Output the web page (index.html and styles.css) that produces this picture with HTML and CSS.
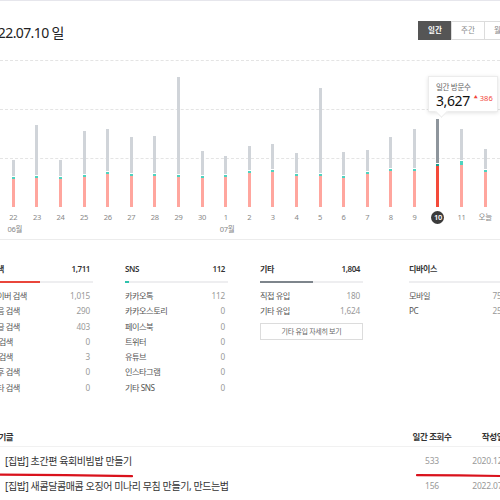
FILE: index.html
```html
<!DOCTYPE html>
<html lang="ko">
<head>
<meta charset="utf-8">
<title>방문 통계</title>
<link rel="stylesheet" href="styles.css">
</head>
<body>
<div class="topline"></div>
<header class="head">
  <div class="date">2022.07.10 일</div>
  <div class="tabs">
    <span class="tab on">일간</span><span class="tab">주간</span><span class="tab">월간</span>
  </div>
</header>

<section class="chart">
  <div class="grid"><div class="band"></div><div class="band"></div><div class="band"></div></div>
  <div class="bars">
    <div class="col"><div class="bar" style="height:47px"><i class="g"></i><i class="c"></i><i class="r" style="height:28px"></i></div></div>
    <div class="col"><div class="bar" style="height:82px"><i class="g"></i><i class="c"></i><i class="r" style="height:29px"></i></div></div>
    <div class="col"><div class="bar" style="height:47px"><i class="g"></i><i class="c"></i><i class="r" style="height:28px"></i></div></div>
    <div class="col"><div class="bar" style="height:76px"><i class="g"></i><i class="c"></i><i class="r" style="height:30px"></i></div></div>
    <div class="col"><div class="bar" style="height:78px"><i class="g"></i><i class="c"></i><i class="r" style="height:33px"></i></div></div>
    <div class="col"><div class="bar" style="height:70px"><i class="g"></i><i class="c"></i><i class="r" style="height:31px"></i></div></div>
    <div class="col"><div class="bar" style="height:71px"><i class="g"></i><i class="c"></i><i class="r" style="height:31px"></i></div></div>
    <div class="col"><div class="bar" style="height:130px"><i class="g"></i><i class="c"></i><i class="r" style="height:30px"></i></div></div>
    <div class="col"><div class="bar" style="height:56px"><i class="g"></i><i class="c"></i><i class="r" style="height:29px"></i></div></div>
    <div class="col"><div class="bar" style="height:51px"><i class="g"></i><i class="c"></i><i class="r" style="height:30px"></i></div></div>
    <div class="col"><div class="bar" style="height:61px"><i class="g"></i><i class="c"></i><i class="r" style="height:34px"></i></div></div>
    <div class="col"><div class="bar" style="height:63px"><i class="g"></i><i class="c"></i><i class="r" style="height:35px"></i></div></div>
    <div class="col"><div class="bar" style="height:54px"><i class="g"></i><i class="c"></i><i class="r" style="height:31px"></i></div></div>
    <div class="col"><div class="bar" style="height:119px"><i class="g"></i><i class="c"></i><i class="r" style="height:31px"></i></div></div>
    <div class="col"><div class="bar" style="height:55px"><i class="g"></i><i class="c"></i><i class="r" style="height:29px"></i></div></div>
    <div class="col"><div class="bar" style="height:57px"><i class="g"></i><i class="c"></i><i class="r" style="height:33px"></i></div></div>
    <div class="col"><div class="bar" style="height:70px"><i class="g"></i><i class="c"></i><i class="r" style="height:36px"></i></div></div>
    <div class="col"><div class="bar" style="height:78px"><i class="g"></i><i class="c"></i><i class="r" style="height:36px"></i></div></div>
    <div class="col"><div class="bar active" style="height:88px"><i class="g"></i><i class="c"></i><i class="r" style="height:41px"></i></div></div>
    <div class="col"><div class="bar" style="height:78px"><i class="g"></i><i class="c wide"></i><i class="r" style="height:42px"></i></div></div>
    <div class="col"><div class="bar" style="height:58px"><i class="g"></i><i class="c"></i><i class="r" style="height:35px"></i></div></div>
  </div>
  <div class="tip">
    <div class="tip-label">일간 방문수</div>
    <div class="tip-value">3,627<span class="tip-diff"><span class="up">▲</span>386</span></div>
  </div>
</section>

<div class="days">
  <span>22</span><span>23</span><span>24</span><span>25</span><span>26</span><span>27</span><span>28</span><span>29</span><span>30</span><span>1</span><span>2</span><span>3</span><span>4</span><span>5</span><span>6</span><span>7</span><span>8</span><span>9</span><span><b class="today">10</b></span><span>11</span><span>오늘</span>
  <span class="month">06월</span><span></span><span></span><span></span><span></span><span></span><span></span><span></span><span></span><span class="month">07월</span>
</div>

<section class="stats">
  <div class="box b1">
    <div class="shead"><span>검색</span><span>1,711</span></div>
    <div class="track"><div class="fill red" style="width:48.5%"></div></div>
    <ul class="rows">
      <li><span>네이버 검색</span><span class="v">1,015</span></li>
      <li><span>다음 검색</span><span class="v">290</span></li>
      <li><span>구글 검색</span><span class="v">403</span></li>
      <li><span>빙 검색</span><span class="v">0</span></li>
      <li><span>줌 검색</span><span class="v">3</span></li>
      <li><span>야후 검색</span><span class="v">0</span></li>
      <li><span>기타 검색</span><span class="v">0</span></li>
    </ul>
  </div>
  <div class="box b2">
    <div class="shead"><span>SNS</span><span>112</span></div>
    <div class="track"><div class="fill teal" style="width:4%"></div></div>
    <ul class="rows">
      <li><span>카카오톡</span><span class="v">112</span></li>
      <li><span>카카오스토리</span><span class="v">0</span></li>
      <li><span>페이스북</span><span class="v">0</span></li>
      <li><span>트위터</span><span class="v">0</span></li>
      <li><span>유튜브</span><span class="v">0</span></li>
      <li><span>인스타그램</span><span class="v">0</span></li>
      <li><span>기타 SNS</span><span class="v">0</span></li>
    </ul>
  </div>
  <div class="box b3">
    <div class="shead"><span>기타</span><span>1,804</span></div>
    <div class="track"><div class="fill grey" style="width:51%"></div></div>
    <ul class="rows">
      <li><span>직접 유입</span><span class="v">180</span></li>
      <li><span>기타 유입</span><span class="v">1,624</span></li>
    </ul>
    <div class="more">기타 유입 자세히 보기</div>
  </div>
  <div class="box b4">
    <div class="shead"><span>디바이스</span><span></span></div>
    <div class="track"></div>
    <ul class="rows">
      <li><span>모바일</span><span class="v">75%</span></li>
      <li><span>PC</span><span class="v">25%</span></li>
    </ul>
  </div>
</section>

<section class="popular">
  <div class="phead"><span class="ptitle">인기글</span><span class="pview">일간 조회수</span><span class="pdate">작성일</span></div>
  <div class="prows">
    <div class="prow"><span class="ptitle">[집밥] 초간편 육회비빔밥 만들기</span><span class="pview">533</span><span class="pdate">2020.12.21</span></div>
    <div class="prow"><span class="ptitle">[집밥] 새콤달콤매콤 오징어 미나리 무침 만들기, 만드는법</span><span class="pview">156</span><span class="pdate">2022.07.06</span></div>
  </div>
</section>

<svg class="mark" width="500" height="500" viewBox="0 0 500 500">
  <path d="M0 474.6 Q66 475 132 476.2" />
  <path d="M417 475.2 Q460 475.4 500 476" />
</svg>
</body>
</html>
```

FILE: styles.css
```css
* { box-sizing: border-box; }

body {
  margin: 0;
  width: 500px;
  height: 500px;
  overflow: hidden;
  position: relative;
  background: #fff;
  color: #333;
  font-family: "Noto Sans", "Noto Sans CJK KR", sans-serif;
}

.topline { height: 1px; background: #e6e6ec; }

.head {
  height: 59px;
  display: flex;
  align-items: center;
  justify-content: space-between;
}
.date {
  margin-left: -17px;
  margin-top: 3px;
  font-size: 14px;
  letter-spacing: -0.6px;
  color: #222;
}
.tabs { display: flex; margin-right: -18px; }
.tab {
  width: 34px;
  height: 19px;
  border: 1px solid #dcdcdc;
  margin-left: -1px;
  font-size: 7.5px;
  line-height: 17px;
  text-align: center;
  color: #888;
  background: #fff;
}
.tab.on { background: #555; border-color: #555; color: #fff; font-weight: 600; }

.chart {
  display: grid;
  height: 147px;
  position: relative;
}
.grid, .bars { grid-area: 1 / 1; }
.band { height: 49px; border-top: 1px dashed #e4e4e4; }
.bars {
  display: grid;
  grid-template-columns: repeat(21, 23.6px);
  padding-left: 1.5px;
}
.col { display: flex; justify-content: center; align-items: flex-end; }
.bar { width: 3px; display: flex; flex-direction: column; }
.bar i { display: block; }
.g { flex: 1; background: #d0d4d9; }
.c { height: 2px; background: #4ed3bf; margin-top: 1px; }
.c.wide { height: 4px; }
.r { background: #ffa69e; }
.bar.active .g { background: #8e959c; }
.bar.active .c { background: #17a08e; }
.bar.active .r { background: #f44a3a; }

.tip {
  position: absolute;
  left: 428px;
  top: 16px;
  width: 70px;
  height: 36px;
  background: #fff;
  border: 1px solid #ececec;
  box-shadow: 0 1px 4px rgba(0, 0, 0, 0.12);
  padding: 5px 0 0 7px;
}
.tip::after {
  content: "";
  position: absolute;
  left: 8px;
  bottom: -5px;
  width: 8px;
  height: 8px;
  background: #fff;
  border-right: 1px solid #ececec;
  border-bottom: 1px solid #ececec;
  transform: rotate(45deg);
}
.tip-label { font-size: 7.5px; line-height: 10px; color: #666; letter-spacing: -0.3px; }
.tip-value {
  font-size: 14px;
  line-height: 18px;
  color: #111;
  letter-spacing: -0.4px;
  display: flex;
  align-items: flex-start;
}
.tip-diff { font-size: 7.5px; line-height: 12px; color: #f2463a; margin-left: 4px; letter-spacing: 0; }
.up { font-size: 4px; vertical-align: 2px; margin-right: 2px; }

.days {
  display: grid;
  grid-template-columns: repeat(21, 23.6px);
  grid-template-rows: 13px 11px;
  padding: 4px 0 4px 1.5px;
  border-bottom: 1px solid #ececec;
  font-size: 7.5px;
  color: #888;
  text-align: center;
  letter-spacing: -0.3px;
}
.days span { line-height: 13px; }
.days .month { line-height: 11px; padding-left: 3px; }
.today {
  display: inline-block;
  width: 13px;
  height: 13px;
  border-radius: 50%;
  background: #3b3b3b;
  color: #fff;
  font-weight: 600;
  line-height: 13px;
}

.stats {
  display: flex;
  margin-left: -10px;
  height: 185px;
  padding-top: 21px;
}
.box { width: 103px; flex: none; }
.b2, .b3 { margin-left: 32px; }
.b4 { margin-left: 46px; width: 102px; }
.shead {
  display: flex;
  justify-content: space-between;
  line-height: 16px;
  font-size: 8px;
  font-weight: 600;
  color: #333;
  letter-spacing: -0.4px;
  padding-right: 3px;
}
.track { height: 2px; background: #eeeef0; margin-top: 4px; }
.fill { height: 2px; }
.fill.red { background: #e9463b; }
.fill.teal { background: #2fc2ad; }
.fill.grey { background: #7e858c; }
.rows { list-style: none; margin: 5px 0 0; padding: 0; }
.rows li {
  display: flex;
  justify-content: space-between;
  height: 15.3px;
  line-height: 15.3px;
  font-size: 8.2px;
  color: #555;
  letter-spacing: -0.5px;
  padding-right: 3px;
}
.rows .v { color: #999; letter-spacing: -0.2px; }
.more {
  margin-top: 4.5px;
  height: 17px;
  border: 1px solid #dcdcdc;
  font-size: 7px;
  line-height: 15px;
  text-align: center;
  color: #666;
  letter-spacing: -0.3px;
}

.popular { margin-left: -10px; width: 531px; }
.phead, .prow { display: flex; align-items: center; }
.phead {
  height: 22px;
  border-bottom: 1px solid #f1f1f1;
  font-size: 8.5px;
  font-weight: 600;
  color: #333;
  letter-spacing: -0.4px;
}
.prows { padding-top: 1.5px; }
.prow { height: 24.5px; }
.ptitle { flex: 1; padding-left: 1px; }
.prow .ptitle { padding-left: 15px; font-size: 10px; color: #333; letter-spacing: -0.4px; }
.pview { width: 50px; text-align: center; }
.pdate { width: 56px; margin-left: 8px; text-align: center; }
.prow .pview, .prow .pdate { font-size: 8.5px; color: #999; letter-spacing: -0.2px; }

.mark {
  position: absolute;
  left: 0;
  top: 0;
  pointer-events: none;
}
.mark path { fill: none; stroke: #d9121c; stroke-width: 2.2; stroke-linecap: round; }
```
